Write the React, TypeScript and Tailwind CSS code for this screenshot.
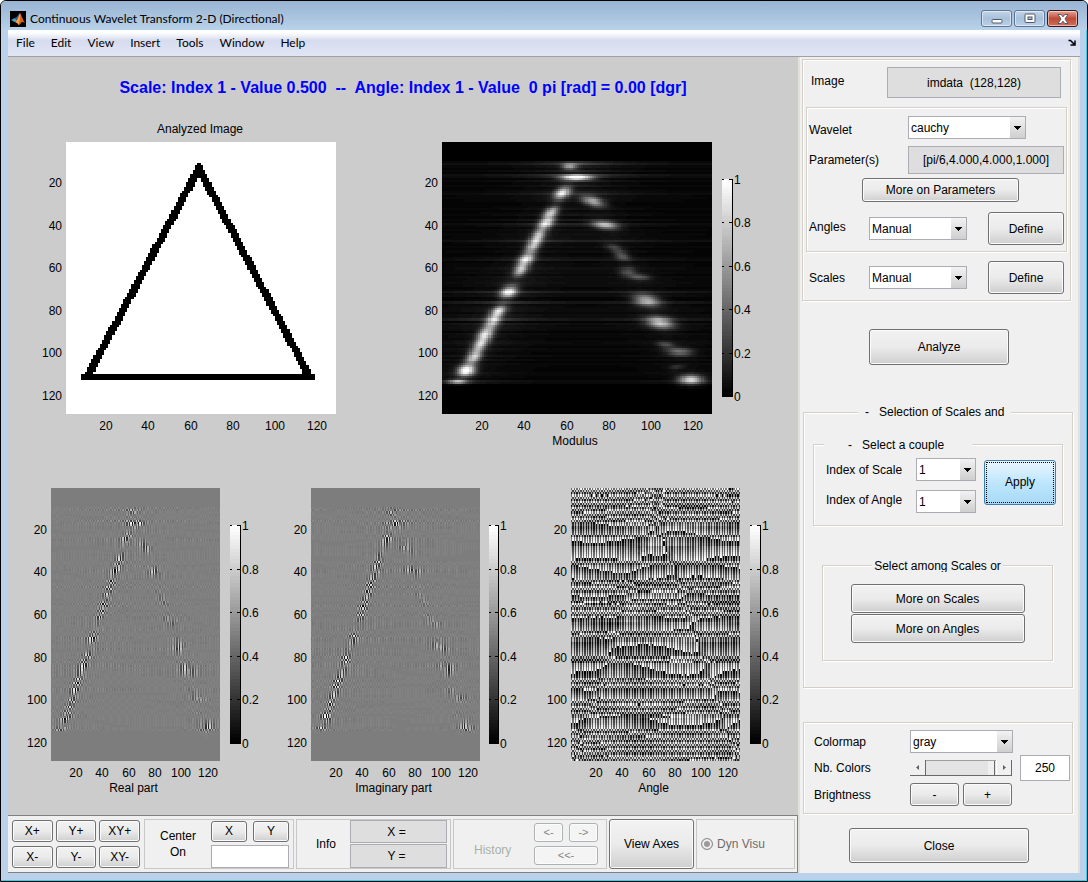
import { useState } from "react";
import type { ReactNode } from "react";

type Matrix = Float64Array;

type AxesProps = {
    title?: string;
    label?: string;
    width: number;
    height: number;
    data: Matrix;
    levels?: number;
    bar?: boolean;
    barGap?: number;
};

const N = 128;
const TICKS = [20, 40, 60, 80, 100, 120];
const BAR_TICKS = [0, 0.2, 0.4, 0.6, 0.8, 1];

// Test image: black triangle on white
function makeTriangle(): Matrix {
    const img = new Float64Array(N * N).fill(1);
    for (let y = 10; y < 112; y++) {
        const left = Math.round(62 - (y - 10) * 0.54);
        const right = Math.round(64 + (y - 10) * 0.535);
        const w = y === 10 ? 2 : y < 14 ? 3 : 4;
        for (let i = 0; i < w; i++) {
            img[y * N + left + i] = 0;
            img[y * N + right - 1 - i] = 0;
        }
    }
    for (let y = 109; y < 112; y++) {
        for (let x = 7; x < 118; x++) img[y * N + x] = 0;
    }
    return img;
}

// Responses along the edges: x, y, amplitude, x spread, y spread, shear
const BLOBS = [
    [60, 11, 0.5, 3.4, 1.4, 0],
    [63.3, 16.3, 1, 7, 1.3, 0],
    [56.5, 23.5, 0.8, 3.4, 3, -0.5],
    [51.3, 32.5, 0.68, 3, 2.6, -0.5],
    [48.8, 37.5, 0.78, 3.3, 3, -0.5],
    [45, 43.8, 0.7, 3.1, 3.3, -0.5],
    [42.6, 48.7, 0.62, 3.1, 2.9, -0.5],
    [39.3, 54.7, 0.8, 3.4, 3, -0.5],
    [36.7, 59.8, 0.66, 3.1, 2.8, -0.5],
    [31.1, 70, 0.85, 3.7, 2.8, -0.4],
    [26.3, 79, 0.76, 3.3, 2.6, -0.5],
    [23.6, 83.8, 0.66, 3.3, 3.2, -0.5],
    [20, 90, 0.78, 3.5, 3.2, -0.5],
    [17.5, 95, 0.68, 3.2, 3, -0.5],
    [14.6, 100.7, 0.74, 3.3, 3.2, -0.5],
    [11, 107, 1, 4, 2.5, -0.3],
    [7, 112.3, 0.65, 4.4, 1.1, 0],
    [71.2, 27.5, 0.6, 4.6, 2.4, 1],
    [76.8, 38.5, 0.65, 5.6, 2.1, 0.8],
    [80.9, 49.3, 0.22, 3.8, 1.9, 0.8],
    [84.8, 53, 0.3, 3.3, 2.2, 0.5],
    [87.5, 60.5, 0.25, 3.8, 2.2, 0],
    [93, 63, 0.3, 4.8, 1.5, 0.5],
    [96.5, 74, 0.62, 5.8, 2.7, 0.6],
    [102.8, 84.5, 0.7, 6, 2.7, 0.6],
    [105.5, 94.8, 0.25, 3.8, 1.5, 0.6],
    [112, 98.2, 0.4, 6, 1.8, 0.4],
    [110.5, 105.5, 0.16, 3.6, 1.2, -0.6],
    [117.5, 111.3, 0.82, 5.4, 2.2, 0],
];

// Rows where the phase turns slowly: first row, last row, step
const SLOW_ROWS = [
    [17, 21, 0.5],
    [24, 33, 0.28],
    [37, 42, 0.5],
    [50, 52, 0.6],
    [61, 66, 0.4],
    [71, 78, 0.3],
    [83, 88, 0.3],
    [95, 98, 0.5],
    [107, 112, 0.35],
];

function noise(n: number) {
    const s = Math.sin(n * 127.1 + 311.7) * 43758.5453;
    return s - Math.floor(s);
}

// Horizontal leakage of the strongest responses
function rowGlow(y: number) {
    if (y < 9 || y > 113) return 0;
    const peaks = [10, 15, 16, 24, 38, 46, 55, 70, 75, 83, 85, 112];
    return 0.03 + 0.07 * noise(y) + (peaks.includes(y) ? 0.09 : 0);
}

function makeCoefs() {
    const mod = new Float64Array(N * N);
    const phase = new Float64Array(N * N);
    let rowPhase = 0;
    for (let y = 0; y < N; y++) {
        const slow = SLOW_ROWS.find(([from, to]) => y >= from && y <= to);
        rowPhase += slow ? slow[2] : 1.75 + 0.5 * noise(y + 7);
        const leftLeg = 64 - (y - 12) * 0.545;
        const rightLeg = 64 + (y - 12) * 0.535;
        for (let x = 0; x < N; x++) {
            let m = 0;
            for (const [bx, by, amp, sx, sy, shear] of BLOBS) {
                const dy = y - by;
                const dx = x - bx - shear * dy;
                m += amp * Math.exp(-((dx * dx) / (sx * sx) + (dy * dy) / (sy * sy)));
            }
            const dl = x - leftLeg;
            const dr = x - rightLeg;
            const halo = Math.exp(-Math.abs(dl) / 16) + 0.6 * Math.exp(-Math.abs(dr) / 16) + 0.3;
            const i = y * N + x;
            mod[i] = Math.min(1, m + rowGlow(y) * halo);
            const bend = 0.7 * Math.atan(dl / 2) + 1.1 * Math.atan(dr / 2);
            const wave = 0.7 * Math.sin(x / 17 + Math.floor(y / 9) * 2.1);
            const fine = y > 8 && y < 114 ? 1 : 2.2;
            const near = Math.exp(-Math.abs(dl) / 3) + Math.exp(-Math.abs(dr) / 3);
            phase[i] = Math.PI * x - 0.02 * x + rowPhase + bend + wave + (near * (1 - m) + 0.15) * fine * (noise(i) - 0.5);
        }
    }
    return { mod, phase };
}

function rescale(m: Matrix): Matrix {
    let lo = Infinity;
    let hi = -Infinity;
    for (const v of m) {
        lo = Math.min(lo, v);
        hi = Math.max(hi, v);
    }
    return m.map((v) => (v - lo) / (hi - lo));
}

const triangle = makeTriangle();
const { mod: modulus, phase } = makeCoefs();
const realPart = rescale(modulus.map((m, i) => m * Math.cos(phase[i])));
const imagPart = rescale(modulus.map((m, i) => m * Math.sin(phase[i])));
const angle = rescale(phase.map((p) => Math.atan2(Math.sin(p), Math.cos(p))));

// One path per gray level, made of horizontal runs of cells
function toPaths(data: Matrix, levels: number) {
    const paths: string[] = new Array(levels).fill("");
    for (let y = 0; y < N; y++) {
        let x = 0;
        while (x < N) {
            const level = Math.round(data[y * N + x] * (levels - 1));
            let end = x + 1;
            while (end < N && Math.round(data[y * N + end] * (levels - 1)) === level) end++;
            paths[level] += `M${x} ${y}h${end - x}v1h${x - end}z`;
            x = end;
        }
    }
    return paths;
}

function gray(t: number) {
    const g = Math.round(t * 255);
    return `rgb(${g},${g},${g})`;
}

function Axes({ title, label, width, height, data, levels = 48, bar, barGap = 10 }: AxesProps) {
    const left = 30;
    const top = 24;
    const barX = left + width + barGap;
    const barW = barGap === 10 ? 10 : 9;
    const barTop = top + 37;
    const barH = height - 54;
    const bottom = top + height;
    return (
        <svg
            width={left + width + (bar ? 42 : 0)}
            height={bottom + 40}
            className="shrink-0 font-['Liberation_Sans',sans-serif] text-xs"
            fill="#000"
        >
            {title && <text x={left + width / 2 - 1} y={top - 9} textAnchor="middle">{title}</text>}
            <svg x={left} y={top} width={width} height={height} viewBox="0 0 128 128" preserveAspectRatio="none">
                {toPaths(data, levels).map((d, i) => (
                    d && <path key={i} d={d} fill={gray(i / (levels - 1))} shapeRendering="crispEdges" />
                ))}
            </svg>
            {TICKS.map((t) => (
                <g key={t}>
                    <text x={left - 4} y={top + Math.round(((t - 0.5) * height) / N) + 4} textAnchor="end">{t}</text>
                    <text x={left + Math.round(((t - 0.5) * width) / N) - 1} y={bottom + 16} textAnchor="middle">{t}</text>
                </g>
            ))}
            {label && <text x={left + width / 2 - 2} y={bottom + 31} textAnchor="middle">{label}</text>}
            {bar && (
                <g shapeRendering="crispEdges">
                    {Array.from({ length: 64 }, (_, i) => (
                        <rect
                            key={i}
                            x={barX}
                            y={barTop + (i * barH) / 64}
                            width={barW}
                            height={barH / 64}
                            fill={gray((63 - i) / 63)}
                        />
                    ))}
                    <rect x={barX + barW} y={barTop} width={1} height={barH} />
                    {BAR_TICKS.map((t) => {
                        const y = barTop + Math.round((1 - t) * (barH - 1));
                        return (
                            <g key={t}>
                                <rect x={barX} y={y} width={2} height={1} />
                                <rect x={barX + barW - 3} y={y} width={3} height={1} />
                                <text x={barX + barW + 2} y={y + 5}>{t}</text>
                            </g>
                        );
                    })}
                </g>
            )}
        </svg>
    );
}

function Button({ children, className = "", disabled }: { children: ReactNode; className?: string; disabled?: boolean }) {
    return (
        <button
            disabled={disabled}
            className={`rounded-[3px] border border-[#707070] bg-linear-to-b from-[#f2f2f2] from-0% via-[#ebebeb] via-50% to-[#cfcfcf] shadow-[inset_0_0_0_1px_#fbfbfb] disabled:border-[#adb2b5] disabled:bg-none disabled:bg-[#f4f4f4] disabled:text-[#838383] ${className}`}
        >
            {children}
        </button>
    );
}

function Select({ id, options, className = "" }: { id: string; options: string[]; className?: string }) {
    return (
        <div className={`relative h-[23px] shrink-0 ${className}`}>
            <select id={id} className="size-full appearance-none border border-[#abadb3] bg-white pl-0.5 outline-none">
                {options.map((o) => (
                    <option key={o}>{o}</option>
                ))}
            </select>
            <div className="pointer-events-none absolute inset-y-px right-px flex w-[15px] items-center justify-center bg-linear-to-b from-[#f2f2f2] to-[#cfcfcf]">
                <svg width="7" height="4" viewBox="0 0 7 4" shapeRendering="crispEdges">
                    <path d="M0 0h7v1h-1v1h-1v1h-1v1h-1v-1h-1v-1h-1v-1h-1z" />
                </svg>
            </div>
        </div>
    );
}

function Readout({ children, className = "" }: { children: ReactNode; className?: string }) {
    return (
        <div className={`flex items-center justify-center border border-[#abadb3] bg-[#dedede] whitespace-pre ${className}`}>
            {children}
        </div>
    );
}

function MatlabLogo() {
    return (
        <svg width="16" height="16" viewBox="0 0 16 16">
            <rect width="16" height="16" fill="#000" />
            <path d="M1 9 5 7l2 2-2.500 2z" fill="#4aa3c7" />
            <path d="M5 7c2-.5 3-3 5-5L8 8l-1.500 1.500z" fill="#2b5f9e" />
            <path d="M10 2c1 1 2.500 6 5 10-2-1-3-1.500-4 0-1 1.200-1.500 2-2.500 2C8 12 6 11 4.500 11 8 10 8.500 5 10 2z" fill="#d9601f" />
            <path d="M10 2c.5 3 0 7-1.500 12C8 12 6 11 4.500 11 8 10 8.500 5 10 2z" fill="#f0a54a" />
        </svg>
    );
}

function TitleBar() {
    const frame = "flex h-[17px] w-[31px] items-center justify-center rounded-[3px] border shadow-[inset_0_0_0_1px_rgba(255,255,255,0.5)]";
    return (
        <header className="flex h-[29px] items-center bg-linear-to-b from-[#98b4d2] to-[#b9d1ea] pt-1.5 pr-[9px] pl-[9px]">
            <MatlabLogo />
            <h1 className="ml-1 grow font-['Lato',sans-serif] text-[12px]">Continuous Wavelet Transform 2-D (Directional)</h1>
            <div className="flex gap-0.5">
                <button aria-label="Minimize" className={`${frame} border-[#5f7690] bg-linear-to-b from-[#c3d5e9] via-[#a8c0db] to-[#b9d1ea]`}>
                    <svg width="12" height="11" viewBox="0 0 12 11"><rect x="1" y="6.500" width="10" height="3.500" rx="1" fill="#fff" stroke="#535a66" /></svg>
                </button>
                <button aria-label="Maximize" className={`${frame} border-[#5f7690] bg-linear-to-b from-[#c3d5e9] via-[#a8c0db] to-[#b9d1ea]`}>
                    <svg width="12" height="11" viewBox="0 0 12 11">
                        <rect x="1" y="1" width="10" height="8.500" rx="1" fill="#fff" stroke="#535a66" />
                        <rect x="4" y="4" width="4" height="2.500" fill="#a8c0db" stroke="#535a66" />
                    </svg>
                </button>
                <button aria-label="Close window" className={`${frame} border-[#43141a] bg-linear-to-b from-[#e3a396] via-[#c04a35] to-[#d0705c]`}>
                    <svg width="12" height="10" viewBox="0 0 12 10">
                        <path d="M1 .500h3.200L6 2.800 7.800.500H11L8 5l3 4.500H7.800L6 7.200 4.200 9.500H1L4 5z" fill="#fff" stroke="#535a66" />
                    </svg>
                </button>
            </div>
        </header>
    );
}

function MenuBar() {
    const items = ["File", "Edit", "View", "Insert", "Tools", "Window", "Help"];
    return (
        <nav className="flex h-[27px] items-center gap-4 border-b border-[#a0a0a0] bg-linear-to-b from-white from-10% via-[#d6dcee] via-40% to-[#e1e6f6] pr-1 pl-2 font-['Lato',sans-serif]">
            {items.map((item) => (
                <button key={item}>{item}</button>
            ))}
            <svg className="ml-auto" width="8" height="8" viewBox="0 0 8 8" fill="none" stroke="#000" strokeWidth="1.500">
                <path d="M.500 1.500h2L6 5M7 1.500v4.500H2.500" />
            </svg>
        </nav>
    );
}

function Toolbar() {
    const group = "flex h-[50px] items-center border border-[#c8c8c8]";
    return (
        <footer className="flex items-center gap-0.5 border-y border-r border-[#808080] bg-[#f0f0f0] py-[3px] pl-1">
            <div className="mr-0.5 grid w-[128px] grid-cols-3 gap-x-[3px] gap-y-1">
                {["X+", "Y+", "XY+", "X-", "Y-", "XY-"].map((t) => (
                    <Button key={t} className="h-[22px]">{t}</Button>
                ))}
            </div>
            <div className={`${group} w-[150px] gap-3 pl-3`}>
                <label htmlFor="center" className="w-[42px] text-center leading-4">Center On</label>
                <div className="grid w-[78px] grid-cols-2 gap-x-1.5 gap-y-[3px]">
                    <Button className="h-[21px]">X</Button>
                    <Button className="h-[21px]">Y</Button>
                    <input id="center" className="col-span-2 h-[23px] border border-[#abadb3] bg-white px-1 outline-none" />
                </div>
            </div>
            <div className={`${group} w-[155px] justify-between pr-[3px] pl-[19px]`}>
                <span>Info</span>
                <div className="w-[97px]">
                    <Readout className="h-[23px] pr-1">X =</Readout>
                    <Readout className="mt-px h-6 pr-1">Y =</Readout>
                </div>
            </div>
            <div className={`${group} w-[154px] justify-between pr-2 pl-5`}>
                <span className="pt-3 text-[#a8b0a8]">History</span>
                <div className="grid w-[64px] grid-cols-2 gap-x-1.5 gap-y-1 text-[11px]">
                    <Button disabled className="h-[19px]">&lt;-</Button>
                    <Button disabled className="h-[19px]">-&gt;</Button>
                    <Button disabled className="col-span-2 h-[19px]">&lt;&lt;-</Button>
                </div>
            </div>
            <Button className="h-[50px] w-[85px]">View Axes</Button>
            <div className={`${group} mr-0.5 grow pl-1 text-[#6d6d6d]`}>
                <label className="flex items-center gap-1">
                    <input
                        type="radio"
                        defaultChecked
                        disabled
                        className="size-3 appearance-none rounded-full border border-[#909090] bg-[#9a9a9a] shadow-[inset_0_0_0_2px_#f0f0f0]"
                    />
                    Dyn Visu
                </label>
            </div>
        </footer>
    );
}

function SidePanel() {
    const [colors, setColors] = useState(250);
    const box = "border border-[#d4d0c8] shadow-[1px_1px_0_#fff,inset_1px_1px_0_#fff]";
    return (
        <aside className="flex w-[282px] shrink-0 flex-col border-x-2 border-[#e3e1dc] bg-[#f0f0f0] px-0.5">
            <section className={`${box} mt-0.5 w-[269px] pb-1.5`}>
                <div className="flex items-center justify-between pt-[7px] pr-[9px] pl-2">
                    <span className="pb-1">Image</span>
                    <Readout className="h-[31px] w-[174px]">imdata  (128,128)</Readout>
                </div>
                <div className={`${box} mx-[3px] mt-[9px] pb-1.5 pl-0.5`}>
                    <div className="flex items-center justify-between pt-2 pr-10">
                        <label htmlFor="wavelet" className="pt-1">Wavelet</label>
                        <Select id="wavelet" options={["cauchy", "morl"]} className="w-[118px]" />
                    </div>
                    <div className="mt-[7px] flex items-center justify-between pr-0.5">
                        <span>Parameter(s)</span>
                        <Readout className="h-7 w-[156px]">[pi/6,4.000,4.000,1.000]</Readout>
                    </div>
                    <Button className="mt-1 ml-[53px] h-6 w-[157px]">More on Parameters</Button>
                    <div className="mt-2.5 flex items-center pr-0.5">
                        <label htmlFor="angles" className="w-[60px] pb-1">Angles</label>
                        <Select id="angles" options={["Manual", "Linear"]} className="w-[98px]" />
                        <Button className="ml-auto h-[33px] w-[76px]">Define</Button>
                    </div>
                </div>
                <div className="mt-[9px] flex items-center pr-1.5 pl-1.5">
                    <label htmlFor="scales" className="w-[60px]">Scales</label>
                    <Select id="scales" options={["Manual", "Linear"]} className="w-[98px]" />
                    <Button className="ml-auto h-[33px] w-[76px]">Define</Button>
                </div>
            </section>

            <Button className="mt-7 h-9 w-[140px] self-center">Analyze</Button>

            <fieldset className={`${box} mt-[39px] ml-px h-[284px] w-[270px]`}>
                <legend className="ml-[54px] h-4 bg-[#f0f0f0] px-[7px] leading-4 whitespace-pre">-   Selection of Scales and</legend>
                <fieldset className={`${box} mx-[9px] mt-[17px] h-[89px]`}>
                    <legend className="ml-2.5 h-3.5 w-[148px] overflow-hidden bg-[#f0f0f0] pl-6 leading-4 whitespace-pre">-   Select a couple</legend>
                    <div className="flex items-center justify-between pr-1.5 pl-3">
                        <div className="mt-[7px] grid grid-cols-[90px_60px] items-center gap-y-[9px]">
                            <label htmlFor="scale-index">Index of Scale</label>
                            <Select id="scale-index" options={["1", "2"]} className="w-[60px]" />
                            <label htmlFor="angle-index" className="pb-1">Index of Angle</label>
                            <Select id="angle-index" options={["1", "2"]} className="w-[60px]" />
                        </div>
                        <button className="h-[45px] w-[72px] rounded-[3px] border border-[#3c7fb1] bg-linear-to-b from-[#eaf6fd] via-[#bee6fd] via-50% to-[#a7d9f5] p-px">
                            <span className="flex size-full items-center justify-center border border-dotted border-black">Apply</span>
                        </button>
                    </div>
                </fieldset>
                <fieldset className={`${box} mt-8 ml-[18px] flex h-[103px] w-[231px] flex-col items-center pt-3`}>
                    <legend className="mx-auto h-3.5 overflow-hidden bg-[#f0f0f0] px-0.5 leading-4">Select among Scales or</legend>
                    <Button className="h-[29px] w-[174px]">More on Scales</Button>
                    <Button className="mt-px h-[29px] w-[174px]">More on Angles</Button>
                </fieldset>
            </fieldset>

            <section className={`${box} mt-[34px] ml-px grid w-[270px] grid-cols-[96px_102px_1fr] items-center gap-y-0.5 py-[7px] pl-2.5`}>
                <label htmlFor="colormap">Colormap</label>
                <Select id="colormap" options={["gray", "jet"]} className="w-[103px]" />
                <span />
                <label htmlFor="colors">Nb. Colors</label>
                <div className="flex h-4 border-b border-[#696969] bg-[#e3e3e3]">
                    <button aria-label="Fewer colors" onClick={() => setColors(colors - 1)} className="flex w-4 shrink-0 items-center justify-center border-r border-[#696969] bg-[#f0f0f0]">
                        <svg width="3" height="5" viewBox="0 0 3 5" fill="#606060"><path d="M3 0v5L0 2.500z" /></svg>
                    </button>
                    <input
                        id="colors"
                        type="range"
                        min={2}
                        max={256}
                        value={colors}
                        onChange={(e) => setColors(Number(e.target.value))}
                        className="h-full w-0 grow appearance-none border-t border-[#a0a0a0] bg-transparent [&::-webkit-slider-thumb]:h-[14px] [&::-webkit-slider-thumb]:w-[7px] [&::-webkit-slider-thumb]:appearance-none [&::-webkit-slider-thumb]:border-r [&::-webkit-slider-thumb]:border-[#696969] [&::-webkit-slider-thumb]:bg-[#f0f0f0]"
                    />
                    <button aria-label="More colors" onClick={() => setColors(colors + 1)} className="flex w-4 shrink-0 items-center justify-center border-x border-l-white border-r-[#696969] bg-[#f0f0f0]">
                        <svg width="3" height="5" viewBox="0 0 3 5" fill="#606060"><path d="M0 0v5l3-2.500z" /></svg>
                    </button>
                </div>
                <input
                    aria-label="Number of colors"
                    value={colors}
                    onChange={(e) => setColors(Number(e.target.value) || 0)}
                    className="ml-2 h-[26px] w-[50px] border border-[#abadb3] bg-white text-center outline-none"
                />
                <span>Brightness</span>
                <div className="grid grid-cols-2 gap-1">
                    <Button className="h-[23px]">-</Button>
                    <Button className="h-[23px]">+</Button>
                </div>
            </section>

            <Button className="mt-3.5 mb-2 h-[35px] w-[180px] self-center">Close</Button>
        </aside>
    );
}

export default function App() {
    return (
        <div className="flex min-h-screen flex-col overflow-hidden rounded-t-md border border-black bg-[#b9d1ea] font-['Liberation_Sans',Arial,sans-serif] text-xs text-black shadow-[inset_-1px_-1px_0_#2ad4ee]">
            <TitleBar />
            <div className="mr-[7px] mb-2 ml-[7px] flex grow flex-col">
                <MenuBar />
                <div className="flex grow bg-[#cccccc]">
                    <main className="flex min-w-0 grow flex-col">
                        <h2 className="flex h-[61px] items-center justify-center text-base font-bold whitespace-pre text-[#0000ff]">
                            {"Scale: Index 1 - Value 0.500  --  Angle: Index 1 - Value  0 pi [rad] = 0.00 [dgr]"}
                        </h2>
                        <div className="flex justify-between pr-11 pl-7">
                            <Axes title="Analyzed Image" width={270} height={272} data={triangle} levels={2} />
                            <Axes label="Modulus" width={270} height={272} data={modulus} levels={64} bar />
                        </div>
                        <div className="mt-2.5 flex grow justify-between pr-4 pl-[13px]">
                            <Axes label="Real part" width={169} height={273} data={realPart} bar />
                            <Axes label="Imaginary part" width={169} height={273} data={imagPart} bar barGap={9} />
                            <Axes label="Angle" width={169} height={273} data={angle} bar />
                        </div>
                        <Toolbar />
                    </main>
                    <SidePanel />
                </div>
            </div>
        </div>
    );
}
